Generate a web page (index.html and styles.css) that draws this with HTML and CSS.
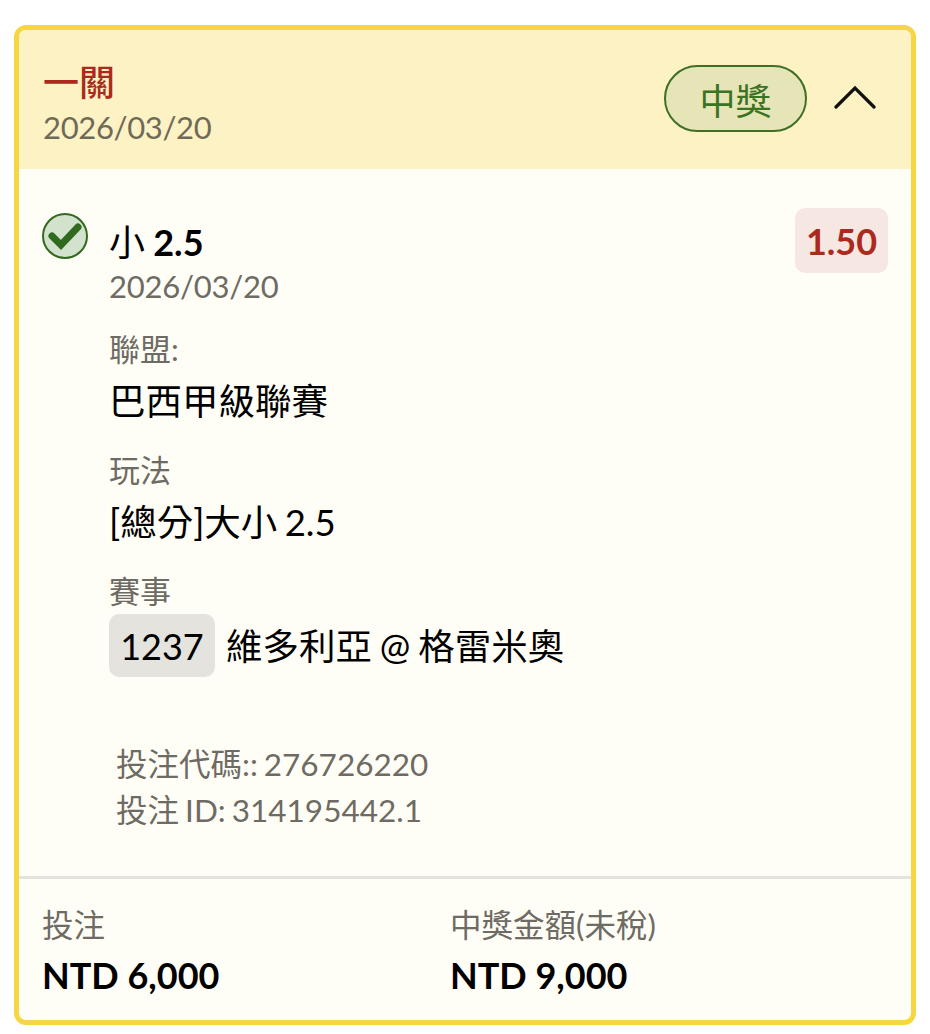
FILE: index.html
```html
<!DOCTYPE html>
<html lang="zh-Hant">
<head>
<meta charset="UTF-8" />
<meta name="viewport" content="width=device-width, initial-scale=1" />
<title>一關</title>
<link rel="stylesheet" href="styles.css">
</head>
<body>

<div class="card">

  <!-- Header -->
  <div class="card-head">
    <div class="head-left">
      <div class="head-title">一關</div>
      <div class="head-date">2026/03/20</div>
    </div>
    <span class="status-pill">中獎</span>
    <svg class="chevron" width="42" height="24" viewBox="0 0 42 24">
      <path d="M2 22 L21 3 L40 22" fill="none" stroke="#111" stroke-width="3.2" stroke-linecap="round" stroke-linejoin="miter" />
    </svg>
  </div>

  <!-- Selection -->
  <div class="card-body">
    <div class="leg">
      <svg class="check" width="46" height="46" viewBox="0 0 46 46">
        <circle cx="23" cy="23" r="22" fill="#d3e2cc" stroke="#33691e" stroke-width="2" />
        <path d="M10 23 L19 32 L36 14" fill="none" stroke="#2e6b1f" stroke-width="7" stroke-linecap="round" stroke-linejoin="miter" />
      </svg>
      <div class="leg-main">
        <div class="leg-top">
          <div>
            <div class="leg-name">小 <b>2.5</b></div>
            <div class="leg-date">2026/03/20</div>
          </div>
          <span class="odds">1.50</span>
        </div>
        <div class="field field-first">
          <div class="field-label">聯盟:</div>
          <div class="field-value">巴西甲級聯賽</div>
        </div>
        <div class="field">
          <div class="field-label">玩法</div>
          <div class="field-value">[總分]大小 2.5</div>
        </div>
        <div class="field">
          <div class="field-label">賽事</div>
          <div class="match-row">
            <span class="match-no">1237</span>
            <span class="match-name">維多利亞 @ 格雷米奧</span>
          </div>
        </div>
      </div>
    </div>

    <div class="codes">
      <div>投注代碼:: 276726220</div>
      <div>投注 ID: 314195442.1</div>
    </div>
  </div>

  <!-- Totals -->
  <div class="card-foot">
    <div class="total">
      <div class="total-label">投注</div>
      <div class="total-value">NTD 6,000</div>
    </div>
    <div class="total">
      <div class="total-label">中獎金額(未稅)</div>
      <div class="total-value">NTD 9,000</div>
    </div>
  </div>

</div>

</body>
</html>
```

FILE: styles.css
```css
* { box-sizing: border-box; }
body { margin: 0; padding: 25px 14px 9px; background: #fff; font-family: Lato, "Noto Sans CJK TC", sans-serif; color: #000; }

.card { height: 1000px; border: 5px solid #f6d743; border-radius: 12px; background: #fffef6; overflow: hidden; display: flex; flex-direction: column; }

.card-head { height: 139px; flex: none; background: #fdf2c4; display: flex; align-items: center; padding: 0 35px 0 24px; }
.head-left { flex: 1; padding-top: 7px; }
.head-title { font-size: 36px; line-height: 44px; font-weight: 500; color: #ab2a1c; }
.head-date { font-size: 31px; line-height: 40px; letter-spacing: -0.35px; color: #6f6a58; margin-top: 3px; }
.status-pill { width: 143px; height: 67px; border: 2px solid #3f6f24; border-radius: 34px; background: #e6e5b8; color: #3a7321; font-size: 36px; display: flex; align-items: center; justify-content: center; margin: -2px 27px 0 0; }
.chevron { flex: none; margin-top: -5px; }

.card-body { flex: 1; padding: 39px 23px 0; }
.leg { display: flex; }
.check { flex: none; margin: 5px 21px 0 0; }
.leg-main { flex: 1; }
.leg-top { display: flex; justify-content: space-between; align-items: flex-start; }
.leg-name { font-size: 36px; line-height: 44px; margin-top: 12px; word-spacing: -1px; }
.leg-name b { font-weight: 700; }
.leg-date { font-size: 31px; line-height: 40px; letter-spacing: -0.25px; color: #6e6b64; margin-top: 2px; }
.odds { width: 93px; height: 65px; border-radius: 10px; background: #f7e7e2; color: #ab2a1c; font-size: 36px; font-weight: 700; display: flex; align-items: center; justify-content: center; }

.field { margin-top: 17px; }
.field-first { margin-top: 21px; }
.field-label { font-size: 31px; line-height: 44px; color: #6e6b64; }
.field-value { font-size: 36.5px; line-height: 60px; word-spacing: -2px; }
.match-row { display: flex; align-items: center; gap: 11px; margin-top: 1px; }
.match-no { width: 106px; height: 63px; border-radius: 10px; background: #e5e3de; font-size: 36px; display: flex; align-items: center; justify-content: center; }
.match-name { font-size: 36.5px; line-height: 60px; word-spacing: -1.5px; }

.codes { margin: 64px 0 0 74px; font-size: 31.5px; line-height: 46px; word-spacing: -2px; color: #6e6b64; }

.card-foot { height: 144px; flex: none; border-top: 3px solid #e5e3de; display: flex; padding: 25px 23px 0; }
.total { width: 408px; }
.total-label { font-size: 31.5px; line-height: 42px; color: #6e6b64; }
.total-value { font-size: 36px; line-height: 58px; font-weight: 700; }
```
